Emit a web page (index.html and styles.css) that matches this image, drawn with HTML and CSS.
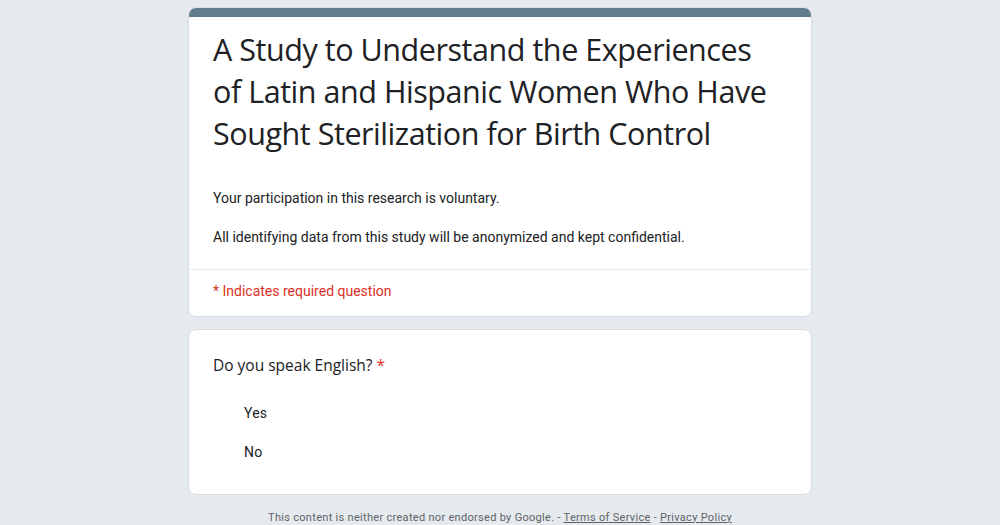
FILE: index.html
```html
<!DOCTYPE html>
<html>
<head>
<meta charset="utf-8">
<link rel="stylesheet" href="styles.css">
</head>
<body>
<div class="page">
  <div class="card header-card">
    <div class="top-bar"></div>
    <div class="header-body">
      <h1 class="title">A Study to Understand the Experiences of Latin and Hispanic Women Who Have Sought Sterilization for Birth Control</h1>
      <div class="description">
        <p>Your participation in this research is voluntary.</p>
        <p>All identifying data from this study will be anonymized and kept confidential.</p>
      </div>
    </div>
    <div class="required-note">* Indicates required question</div>
  </div>
  <div class="card question-card">
    <div class="question">Do you speak English? <span class="star">*</span></div>
    <div class="options">
      <div class="option">Yes</div>
      <div class="option">No</div>
    </div>
  </div>
  <div class="footer">This content is neither created nor endorsed by Google. - <a href="#">Terms of Service</a> - <a href="#">Privacy Policy</a></div>
</div>
</body>
</html>
```

FILE: styles.css
```css
* { box-sizing: border-box; }
html, body { margin: 0; padding: 0; }
body {
  background: #e5eaee;
  font-family: Roboto, "Liberation Sans", sans-serif;
  color: #202124;
}
.page {
  width: 624px;
  margin: 0 auto;
  padding-top: 7px;
}
.card {
  background: #fff;
  border: 1px solid #dadce0;
  border-radius: 8px;
  overflow: hidden;
}
.top-bar {
  height: 10px;
  background: #5f7d8c;
  margin: -1px -1px 0;
}
.header-body {
  padding: 11px 24px 21px;
}
.title {
  margin: 0;
  max-width: 560px;
  font-family: "Open Sans", sans-serif;
  font-weight: 400;
  font-size: 30.5px;
  line-height: 42px;
  letter-spacing: -0.45px;
  color: #202124;
}
.description {
  margin-top: 35px;
  font-size: 14px;
  line-height: 19.5px;
  letter-spacing: 0;
}
.description p { margin: 0 0 19.5px; }
.description p:last-child { margin-bottom: 0; }
.required-note {
  border-top: 1px solid #e8eaed;
  padding: 11px 24px 15px;
  color: #d93025;
  font-size: 14px;
  line-height: 20px;
  letter-spacing: 0;
}
.question-card {
  margin-top: 12px;
  padding: 23px 24px 32px;
}
.question {
  font-family: "Open Sans", sans-serif;
  font-size: 15.5px;
  line-height: 24px;
  letter-spacing: 0;
}
.star { color: #d93025; }
.options {
  margin-top: 26px;
  padding-left: 31px;
}
.option {
  font-size: 14px;
  line-height: 20px;
  letter-spacing: 0.2px;
  margin-bottom: 19px;
}
.option:last-child { margin-bottom: 0; }
.footer {
  margin-top: 15px;
  text-align: center;
  font-size: 11px;
  line-height: 16px;
  color: #5f6368;
  letter-spacing: 0.3px;
}
.footer a { color: #5f6368; }
```
